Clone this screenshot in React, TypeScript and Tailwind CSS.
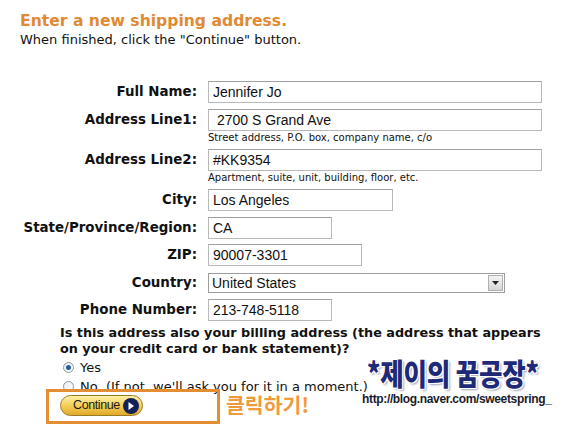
import React from "react";

const labelCls =
  "w-[198px] shrink-0 text-right font-bold text-[13.4px] text-[#111] pr-[1px]";
const inputCls =
  "h-[22px] border border-[#b9b9b9] border-t-[#a0a0a0] bg-white pl-[4px] text-[14px] text-[#111] flex items-center whitespace-pre";
const inputFont = { fontFamily: '"Liberation Sans", Arial, sans-serif' };

function Row({
  label,
  value,
  width,
  mt,
  helper,
}: {
  label: string;
  value: string;
  width: string;
  mt: string;
  helper?: string;
}) {
  return (
    <div className={mt}>
      <div className="flex items-center">
        <div className={labelCls}>{label}</div>
        <div className={`ml-[10px] ${inputCls} ${width}`} style={inputFont}>
          {value}
        </div>
      </div>
      {helper && (
        <div className="ml-[208px] text-[10px] leading-[11px] mt-[1px] text-[#111]">
          {helper}
        </div>
      )}
    </div>
  );
}

function Radio({ checked }: { checked?: boolean }) {
  return (
    <span className="inline-flex items-center justify-center w-[11px] h-[11px] rounded-full border border-[#8a99a8] bg-gradient-to-br from-[#e8ecef] to-[#ffffff]">
      {checked && (
        <span className="w-[5px] h-[5px] rounded-full bg-[#2a5c9a]" />
      )}
    </span>
  );
}

export default function App() {
  return (
    <div
      className="relative w-[577px] h-[431px] overflow-hidden bg-white text-[#111]"
      style={{ fontFamily: '"DejaVu Sans", Verdana, sans-serif' }}
    >
      <div className="pl-[20px] pt-[11px]">
        <div className="text-[15.6px] font-bold leading-[20px] text-[#df8a34]">
          Enter a new shipping address.
        </div>
        <div className="text-[13px] leading-[15px] mt-[1px]">
          When finished, click the "Continue" button.
        </div>
      </div>

      <div className="mt-[34px]">
        <Row label="Full Name:" value="Jennifer Jo" width="w-[334px]" mt="" />
        <Row
          label="Address Line1:"
          value={"\u00a02700 S Grand Ave"}
          width="w-[334px]"
          mt="mt-[6px]"
          helper="Street address, P.O. box, company name, c/o"
        />
        <Row
          label="Address Line2:"
          value="#KK9354"
          width="w-[334px]"
          mt="mt-[6px]"
          helper="Apartment, suite, unit, building, floor, etc."
        />
        <Row label="City:" value="Los Angeles" width="w-[185px]" mt="mt-[6px]" />
        <Row label="State/Province/Region:" value="CA" width="w-[124px]" mt="mt-[6px]" />
        <Row label="ZIP:" value="90007-3301" width="w-[154px]" mt="mt-[5px]" />
        <div className="mt-[7px] flex items-center">
          <div className={labelCls}>Country:</div>
          <div
            className="ml-[10px] h-[20px] w-[297px] border border-[#9e9e9e] bg-white flex items-center justify-between text-[14px]"
            style={inputFont}
          >
            <span className="pl-[3px]">United States</span>
            <span className="mr-[1px] w-[15px] h-[16px] border border-[#b0b0b0] bg-gradient-to-b from-[#f4f4f4] to-[#d6d6d6] flex items-center justify-center">
              <svg width="7" height="4" viewBox="0 0 7 4">
                <path d="M0 0 H7 L3.5 4 Z" fill="#222" />
              </svg>
            </span>
          </div>
        </div>
        <Row label="Phone Number:" value="213-748-5118" width="w-[124px]" mt="mt-[6px]" />
      </div>

      <div className="ml-[60px] mt-[4px] font-bold text-[12.8px] leading-[16px]">
        Is this address also your billing address (the address that appears
        <br />
        on your credit card or bank statement)?
      </div>
      <div className="ml-[63px] mt-[3px] flex items-center gap-[6px] text-[13px] leading-[15px]">
        <Radio checked />
        <span>Yes</span>
      </div>
      <div className="ml-[63px] mt-[4px] flex items-center gap-[6px] text-[13px] leading-[15px]">
        <Radio />
        <span className="whitespace-pre">No  (If not, we'll ask you for it in a moment.)</span>
      </div>

      {/* Continue button */}
      <div className="absolute left-[60px] top-[395px] w-[83px] h-[21px] rounded-full border border-[#9b7b22] bg-gradient-to-b from-[#fdf0a6] via-[#f5cf55] to-[#e0a92a] flex items-center pl-[12px]">
        <span
          className="text-[12.5px] text-[#1a1a1a] tracking-[-0.4px]"
          style={inputFont}
        >
          Continue
        </span>
        <span className="absolute right-[3px] top-[2px] w-[16px] h-[16px] rounded-full bg-[#14205a] flex items-center justify-center">
          <svg width="6" height="8" viewBox="0 0 6 8">
            <path d="M0.5 0 L6 4 L0.5 8 Z" fill="#fff" />
          </svg>
        </span>
      </div>

      {/* orange annotation box */}
      <div className="absolute left-[46px] top-[389px] w-[174px] h-[35px] border-[3px] border-[#e38e32]" />
      <div
        className="absolute left-[226px] top-[392px] text-[20.5px] font-bold leading-[24px] text-[#ef9a3c]"
        style={{ fontFamily: '"Noto Sans CJK KR", sans-serif' }}
      >
        클릭하기!
      </div>

      {/* watermark */}
      <div
        className="absolute left-[367px] top-[353px] origin-top scale-y-[1.18] text-[25.5px] font-black leading-[32px] text-[#1e2a78] tracking-[-0.2px]"
        style={{
          fontFamily: '"Noto Sans CJK KR", sans-serif',
          textShadow:
            "1px 1px 0 #fff, -1px -1px 0 #fff, 1px -1px 0 #fff, -1px 1px 0 #fff, 2px 2px 2px #9aa0b0",
        }}
      >
        *제이의 꿈공장*
      </div>
      <div
        className="absolute left-[362px] top-[392px] text-[12px] font-bold leading-[14px] text-[#1b1b2a] tracking-[-0.35px]"
        style={{
          fontFamily: '"Liberation Sans", Arial, sans-serif',
          textShadow: "0 0 2px #fff",
        }}
      >
        http://blog.naver.com/sweetspring_
      </div>
    </div>
  );
}
